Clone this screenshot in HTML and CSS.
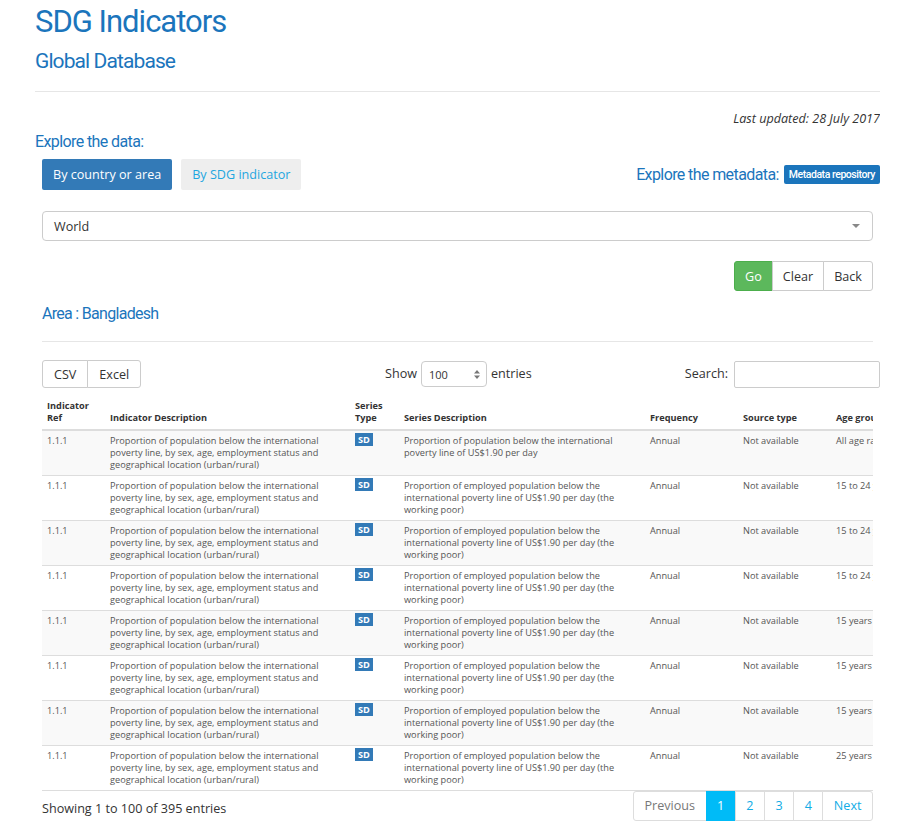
FILE: index.html
```html
<!DOCTYPE html>
<html lang="en">
<head>
<meta charset="utf-8">
<title>SDG Indicators - Global Database</title>
<link rel="stylesheet" href="styles.css">
</head>
<body>
<div class="page">
  <header class="masthead">
    <h1 class="title">SDG Indicators</h1>
    <h2 class="subtitle">Global Database</h2>
  </header>
  <hr class="rule">
  <p class="updated">Last updated: 28 July 2017</p>

  <div class="explore">
    <div class="explore-data">
      <h3 class="section-title">Explore the data:</h3>
      <div class="tabs">
        <button class="tab tab-active">By country or area</button>
        <button class="tab">By SDG indicator</button>
      </div>
    </div>
    <div class="explore-meta">
      <span class="section-title">Explore the metadata:</span>
      <span class="meta-badge">Metadata repository</span>
    </div>
  </div>

  <div class="panel">
    <div class="combo">
      <span class="combo-value">World</span>
      <span class="combo-arrow"></span>
    </div>

    <div class="actions">
      <div class="btn-group">
        <button class="btn btn-go">Go</button>
        <button class="btn">Clear</button>
        <button class="btn">Back</button>
      </div>
    </div>

    <h4 class="area-title">Area : Bangladesh</h4>
    <hr class="rule panel-rule">

    <div class="toolbar">
      <div class="btn-group export">
        <button class="btn btn-sm">CSV</button>
        <button class="btn btn-sm">Excel</button>
      </div>
      <div class="length">
        <span>Show</span>
        <span class="length-select"><span>100</span>
          <svg class="spin" width="6" height="9" viewBox="0 0 6 9"><path d="M3 0 L6 3.5 H0 Z M3 9 L6 5.5 H0 Z" fill="#777"/></svg>
        </span>
        <span>entries</span>
      </div>
      <div class="search">
        <span>Search:</span>
        <span class="search-input"></span>
      </div>
    </div>

    <div class="table-wrap">
      <table class="data">
        <colgroup>
          <col class="c-ref"><col class="c-idesc"><col class="c-type"><col class="c-sdesc"><col class="c-freq"><col class="c-src"><col class="c-age">
        </colgroup>
        <thead>
          <tr>
            <th>Indicator Ref</th>
            <th>Indicator Description</th>
            <th>Series Type</th>
            <th>Series Description</th>
            <th>Frequency</th>
            <th>Source type</th>
            <th>Age group</th>
          </tr>
        </thead>
        <tbody>
          <tr>
            <td>1.1.1</td>
            <td>Proportion of population below the international poverty line, by sex, age, employment status and geographical location (urban/rural)</td>
            <td><span class="sd">SD</span></td>
            <td>Proportion of population below the international poverty line of US$1.90 per day</td>
            <td>Annual</td>
            <td>Not available</td>
            <td>All age ranges or no breakdown by age</td>
          </tr>
          <tr>
            <td>1.1.1</td>
            <td>Proportion of population below the international poverty line, by sex, age, employment status and geographical location (urban/rural)</td>
            <td><span class="sd">SD</span></td>
            <td>Proportion of employed population below the international poverty line of US$1.90 per day (the working poor)</td>
            <td>Annual</td>
            <td>Not available</td>
            <td>15 to 24 years old</td>
          </tr>
          <tr>
            <td>1.1.1</td>
            <td>Proportion of population below the international poverty line, by sex, age, employment status and geographical location (urban/rural)</td>
            <td><span class="sd">SD</span></td>
            <td>Proportion of employed population below the international poverty line of US$1.90 per day (the working poor)</td>
            <td>Annual</td>
            <td>Not available</td>
            <td>15 to 24 years old</td>
          </tr>
          <tr>
            <td>1.1.1</td>
            <td>Proportion of population below the international poverty line, by sex, age, employment status and geographical location (urban/rural)</td>
            <td><span class="sd">SD</span></td>
            <td>Proportion of employed population below the international poverty line of US$1.90 per day (the working poor)</td>
            <td>Annual</td>
            <td>Not available</td>
            <td>15 to 24 years old</td>
          </tr>
          <tr>
            <td>1.1.1</td>
            <td>Proportion of population below the international poverty line, by sex, age, employment status and geographical location (urban/rural)</td>
            <td><span class="sd">SD</span></td>
            <td>Proportion of employed population below the international poverty line of US$1.90 per day (the working poor)</td>
            <td>Annual</td>
            <td>Not available</td>
            <td>15 years old and over</td>
          </tr>
          <tr>
            <td>1.1.1</td>
            <td>Proportion of population below the international poverty line, by sex, age, employment status and geographical location (urban/rural)</td>
            <td><span class="sd">SD</span></td>
            <td>Proportion of employed population below the international poverty line of US$1.90 per day (the working poor)</td>
            <td>Annual</td>
            <td>Not available</td>
            <td>15 years old and over</td>
          </tr>
          <tr>
            <td>1.1.1</td>
            <td>Proportion of population below the international poverty line, by sex, age, employment status and geographical location (urban/rural)</td>
            <td><span class="sd">SD</span></td>
            <td>Proportion of employed population below the international poverty line of US$1.90 per day (the working poor)</td>
            <td>Annual</td>
            <td>Not available</td>
            <td>15 years old and over</td>
          </tr>
          <tr>
            <td>1.1.1</td>
            <td>Proportion of population below the international poverty line, by sex, age, employment status and geographical location (urban/rural)</td>
            <td><span class="sd">SD</span></td>
            <td>Proportion of employed population below the international poverty line of US$1.90 per day (the working poor)</td>
            <td>Annual</td>
            <td>Not available</td>
            <td>25 years old and over</td>
          </tr>
        </tbody>
      </table>
    </div>

    <div class="table-foot">
      <span class="info">Showing 1 to 100 of 395 entries</span>
      <div class="pager">
        <span class="pg pg-disabled">Previous</span>
        <span class="pg pg-active">1</span>
        <span class="pg">2</span>
        <span class="pg">3</span>
        <span class="pg">4</span>
        <span class="pg">Next</span>
      </div>
    </div>
  </div>
</div>
</body>
</html>
```

FILE: styles.css
```css
* { box-sizing: border-box; }

body {
  margin: 0;
  background: #fff;
  color: #333;
  font-family: "Open Sans", "Liberation Sans", sans-serif;
  font-size: 12.6px;
}

.page {
  width: 845px;
  margin-left: 35px;
  overflow: hidden;
}

.masthead { padding-top: 4px; }

.title {
  margin: 0;
  font-family: Roboto, "Liberation Sans", sans-serif;
  font-weight: 400;
  font-size: 31px;
  letter-spacing: -1px;
  line-height: 36px;
  color: #1b75bc;
}

.subtitle {
  margin: 9px 0 0;
  font-family: Roboto, "Liberation Sans", sans-serif;
  font-weight: 400;
  font-size: 21px;
  letter-spacing: -0.9px;
  line-height: 24px;
  color: #1b75bc;
}

.rule {
  border: 0;
  border-top: 1px solid #e6e6e6;
  margin: 18px 0 0;
  height: 0;
}

.updated {
  margin: 18px 0 0;
  text-align: right;
  font-style: italic;
  font-size: 12.6px;
  line-height: 18px;
  color: #333;
}

.explore {
  display: flex;
  justify-content: space-between;
  align-items: flex-end;
  margin-top: 4px;
}

.section-title {
  margin: 0;
  font-family: Roboto, "Liberation Sans", sans-serif;
  font-weight: 400;
  font-size: 16px;
  letter-spacing: -0.6px;
  line-height: 20px;
  color: #1b75bc;
}

.tabs {
  display: flex;
  gap: 9px;
  margin: 7px 0 0 7px;
}

.tab {
  height: 31px;
  padding: 0 11px;
  border: 0;
  border-radius: 2px;
  background: #eeeeee;
  color: #1ea6e0;
  font-family: "Open Sans", "Liberation Sans", sans-serif;
  font-size: 12.6px;
}

.tab-active {
  background: #337ab7;
  color: #fff;
}

.explore-meta {
  display: flex;
  align-items: center;
  gap: 5px;
  height: 31px;
}

.meta-badge {
  background: #1b75bc;
  color: #fff;
  font-family: Roboto, "Liberation Sans", sans-serif;
  font-weight: 500;
  font-size: 10.5px;
  letter-spacing: -0.45px;
  line-height: 19px;
  padding: 0 5px;
  border-radius: 2px;
}

.panel {
  padding: 0 7px;
}

.combo {
  margin-top: 21px;
  height: 30px;
  border: 1px solid #ccc;
  border-radius: 4px;
  display: flex;
  align-items: center;
  justify-content: space-between;
  padding: 0 12px 0 11px;
}

.combo-value {
  font-size: 12.6px;
  color: #333;
}

.combo-arrow {
  width: 0;
  height: 0;
  border-left: 4px solid transparent;
  border-right: 4px solid transparent;
  border-top: 4px solid #888;
}

.actions {
  display: flex;
  justify-content: flex-end;
  margin-top: 20px;
}

.btn-group { display: flex; }

.btn {
  height: 30px;
  padding: 0 10px;
  background: #fff;
  border: 1px solid #ccc;
  color: #333;
  font-family: "Open Sans", "Liberation Sans", sans-serif;
  font-size: 12.6px;
  margin-left: -1px;
}
.btn-group .btn:first-child { border-radius: 3px 0 0 3px; margin-left: 0; }
.btn-group .btn:last-child { border-radius: 0 3px 3px 0; }

.btn-go {
  background: #5cb85c;
  border-color: #4cae4c;
  color: #fff;
  width: 39px;
  padding: 0;
}

.area-title {
  margin: 13px 0 0;
  font-family: Roboto, "Liberation Sans", sans-serif;
  font-weight: 400;
  font-size: 16px;
  letter-spacing: -0.7px;
  line-height: 20px;
  color: #1b75bc;
}

.panel-rule { margin-top: 17px; }

.toolbar {
  display: flex;
  align-items: flex-start;
  height: 28px;
  margin-top: 18px;
  margin-right: -7px;
}

.export { width: 343px; }

.btn-sm { height: 28px; padding: 0 11px; }

.length {
  display: flex;
  align-items: center;
  gap: 4px;
  font-size: 12.6px;
  height: 26px;
  color: #333;
}

.length-select {
  display: inline-flex;
  align-items: center;
  justify-content: space-between;
  width: 66px;
  height: 26px;
  border: 1px solid #ccc;
  border-radius: 4px;
  padding: 0 6px 0 7px;
  font-size: 11px;
  margin-top: 2px;
}

.search {
  display: flex;
  align-items: center;
  gap: 6px;
  margin-left: auto;
  font-size: 12.6px;
  height: 26px;
}

.search-input {
  width: 146px;
  height: 27px;
  border: 1px solid #ccc;
  border-radius: 2px;
  margin-top: 2px;
}

.table-wrap {
  margin-top: 8px;
  overflow: hidden;
  width: 831px;
}

.data {
  table-layout: fixed;
  border-collapse: collapse;
  width: 969px;
  font-size: 9.2px;
  line-height: 12px;
  color: #555;
}

.c-ref { width: 63px; }
.c-idesc { width: 245px; }
.c-type { width: 49px; }
.c-sdesc { width: 246px; }
.c-freq { width: 93px; }
.c-src { width: 93px; }
.c-age { width: 180px; }

.data th {
  text-align: left;
  vertical-align: bottom;
  font-weight: 700;
  color: #333;
  padding: 4px 5px 5px;
  border-bottom: 2px solid #ddd;
}

.data td {
  vertical-align: top;
  padding: 4px 5px 4px;
  border-top: 1px solid #ddd;
  color: #555;
}

.data tbody tr:first-child td { border-top: 0; }
.data tbody tr:nth-child(odd) { background: #f9f9f9; }
.data tbody tr:last-child td { border-bottom: 1px solid #ddd; }

.sd {
  display: inline-block;
  vertical-align: top;
  background: #337ab7;
  color: #fff;
  font-weight: 700;
  padding: 0 3px;
  line-height: 13px;
  margin-top: -2px;
}

.table-foot {
  display: flex;
  justify-content: space-between;
  align-items: flex-start;
}

.info {
  font-size: 12.6px;
  line-height: 18px;
  color: #333;
  margin-top: 9px;
}

.pager {
  display: flex;
  border-radius: 3px;
}

.pg {
  height: 30px;
  line-height: 28px;
  padding: 0 10.5px;
  border: 1px solid #ddd;
  margin-left: -1px;
  font-size: 12.6px;
  color: #11ace6;
  background: #fff;
}
.pg:first-child { margin-left: 0; border-radius: 3px 0 0 3px; }
.pg:last-child { border-radius: 0 3px 3px 0; }
.pg-disabled { color: #777; }
.pg-active { background: #00bbf7; border-color: #00bbf7; color: #fff; }
```
